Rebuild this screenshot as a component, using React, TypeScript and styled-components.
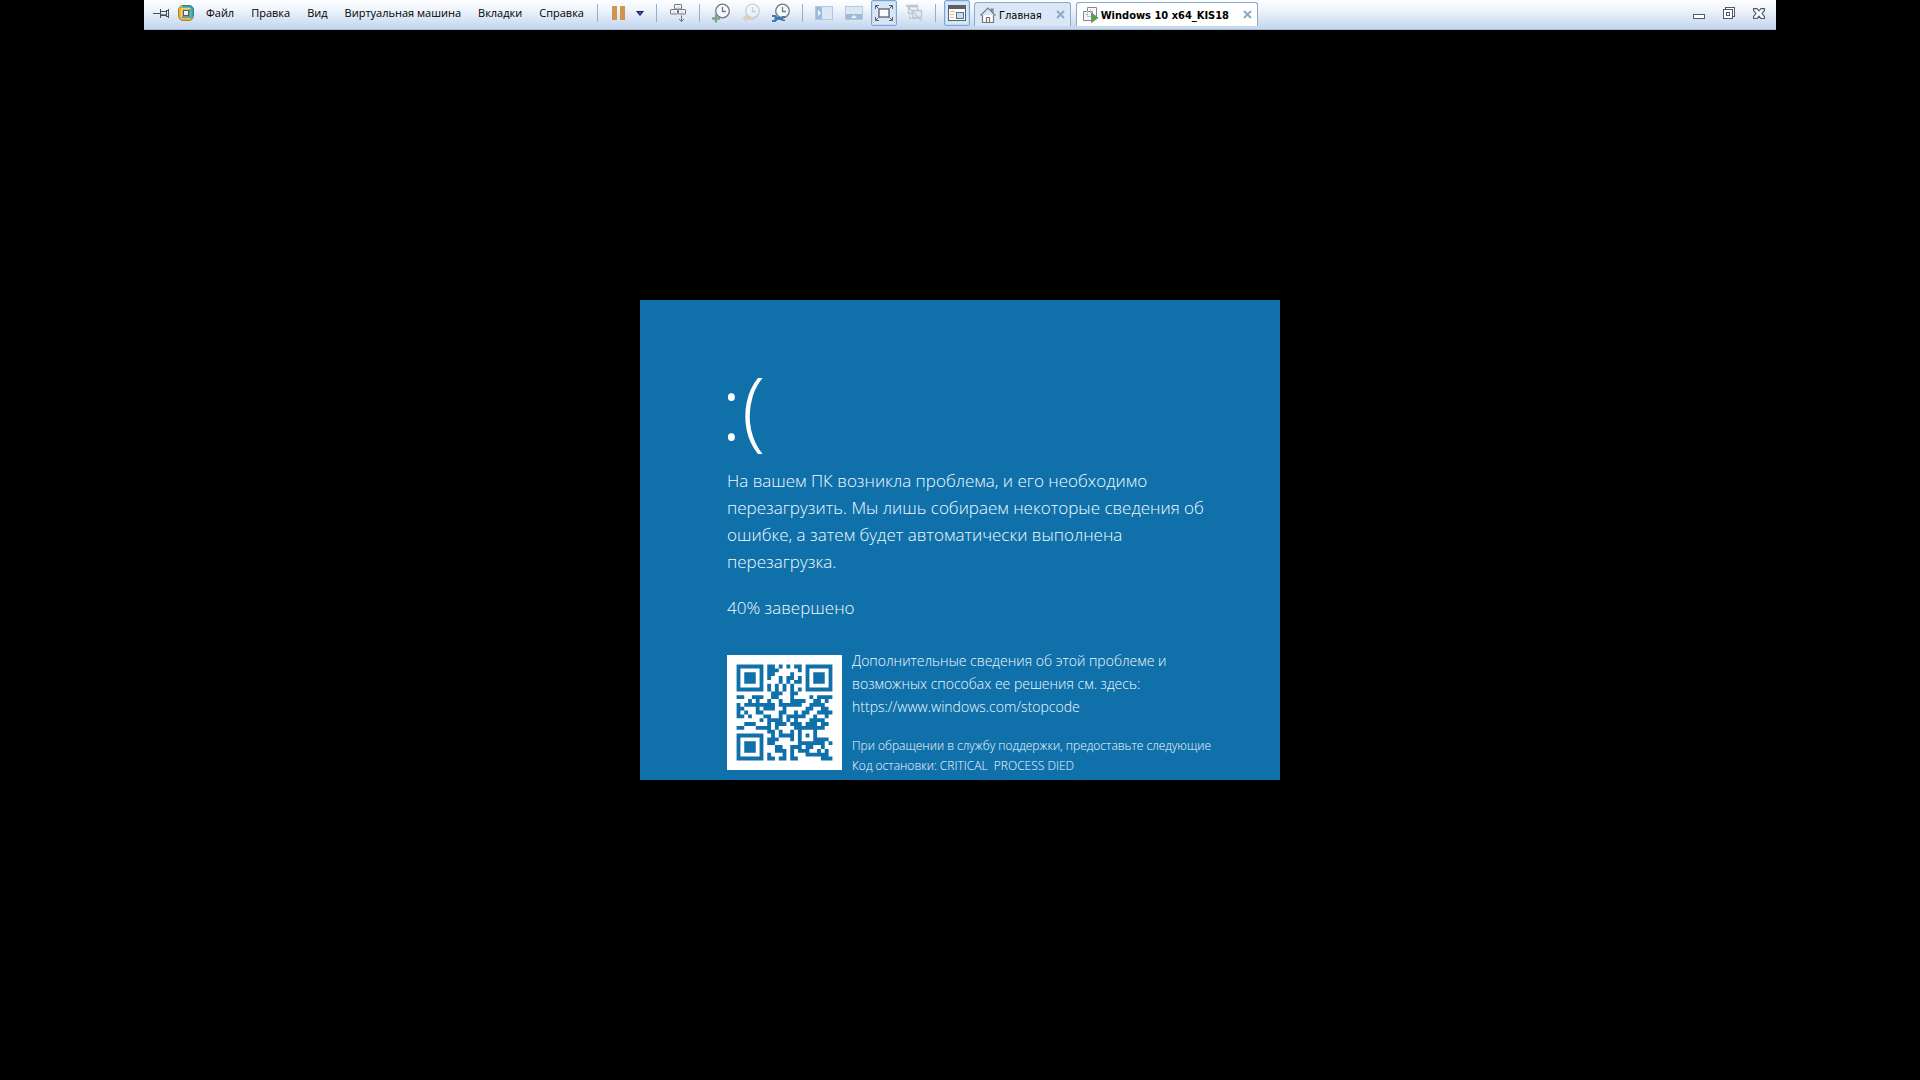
import React from "react";
import styled, { createGlobalStyle, css } from "styled-components";

const GlobalStyle = createGlobalStyle`
  *, *::before, *::after { box-sizing: border-box; }
  html, body { margin: 0; background: #000; }
  body { font-family: "Open Sans", "Noto Sans", sans-serif; }
  button { font: inherit; color: inherit; }
`;

const Desktop = styled.div`
  display: grid;
  grid-template-rows: 1fr auto 1fr;
  justify-items: center;
  min-height: 100vh;
  background: #000;
`;

/* ---------- full-screen toolbar ---------- */

const Bar = styled.header`
  display: flex;
  align-items: flex-start;
  align-self: start;
  width: 85%;
  height: 30px;
  padding: 0 4px;
  background: linear-gradient(#fdfeff 0%, #f1f6fc 30%, #dce8f6 60%, #c2d6ee 100%);
  border-bottom: 1px solid #a9bdd8;
  color: #000;
  font-size: 11px;
`;

const Group = styled.div<{ $gap?: number }>`
  display: flex;
  align-items: center;
  height: 26px;
  gap: ${(p) => p.$gap ?? 4}px;
`;

const Menu = styled.nav`
  display: flex;
  align-items: center;
  gap: 9px;
  height: 26px;
  margin: 0 1px 0 8px;
`;

const MenuButton = styled.button`
  padding: 0 4px;
  border: 0;
  background: none;
  line-height: 26px;
  white-space: nowrap;
`;

const Divider = styled.span`
  flex: none;
  width: 1px;
  height: 18px;
  margin: 4px 8px;
  background: #8fb0d6;
`;

const IconButton = styled.button<{ $active?: boolean; $narrow?: boolean }>`
  display: flex;
  align-items: center;
  justify-content: center;
  flex: none;
  width: ${(p) => (p.$narrow ? 16 : 26)}px;
  height: 26px;
  padding: 0;
  border: 1px solid transparent;
  border-radius: 2px;
  background: none;
  ${(p) =>
    p.$active &&
    css`
      border-color: #7fa6d2;
      background: #d6e6f8;
      box-shadow: inset 0 0 0 1px #c2daf4;
    `}
`;

const Tabs = styled.div`
  display: flex;
  align-items: flex-start;
  gap: 5px;
  margin: 2px auto 0 4px;
`;

const Tab = styled.div<{ $active?: boolean }>`
  display: flex;
  align-items: center;
  height: 24px;
  padding: 0 5px;
  border: 1px solid #88a9d0;
  border-bottom: 0;
  border-radius: 3px 3px 0 0;
  background: ${(p) => (p.$active ? "#fff" : "#dbe7f6")};
  font-family: "DejaVu Sans Condensed", "DejaVu Sans", sans-serif;
  font-size: 11px;
  font-weight: ${(p) => (p.$active ? 700 : 400)};
  font-stretch: condensed;
`;

const TabLabel = styled.button`
  display: flex;
  align-items: center;
  gap: 3px;
  padding: 0;
  border: 0;
  background: none;
  line-height: 22px;
  white-space: nowrap;
`;

const TabText = styled.span`
  padding-top: 2px;
`;

const TabClose = styled.button`
  display: flex;
  margin-left: 14px;
  padding: 0;
  border: 0;
  background: none;
`;

/* ---------- guest screen ---------- */

const StopScreen = styled.main`
  width: 640px;
  max-width: 100%;
  min-height: 480px;
  padding: 60px 64px 4px 87px;
  background: #1070aa;
  color: #f2fbff;
  font-family: "Open Sans", "Noto Sans", sans-serif;
  font-weight: 300;
`;

const Face = styled.h1`
  margin: 0 0 15px -6px;
  color: #fff;
  font-size: 87px;
  line-height: 92px;
  font-weight: 300;
`;

const Message = styled.p`
  margin: 0 0 19px;
  font-size: 17px;
  line-height: 27px;
`;

const Details = styled.section`
  display: flex;
  align-items: center;
  gap: 10px;
  margin-top: 28px;
`;

const QrBox = styled.svg`
  flex: none;
  width: 115px;
  height: 115px;
  background: #fff;
`;

const Info = styled.p`
  margin: 0 0 18px;
  font-size: 14px;
  line-height: 23px;
`;

const Support = styled.p`
  margin: 0;
  font-size: 12px;
  line-height: 20px;
  white-space: nowrap;
`;

/* ---------- QR code, version 2-L ---------- */

const QR_SIZE = 25;

function errorCorrection(data: number[], degree: number): number[] {
  const mul = (a: number, b: number) => {
    let r = 0;
    for (let i = 7; i >= 0; i--) {
      r = (r << 1) ^ ((r >> 7) * 0x11d);
      r ^= ((b >> i) & 1) * a;
    }
    return r;
  };
  const gen: number[] = new Array(degree).fill(0);
  gen[degree - 1] = 1;
  let root = 1;
  for (let i = 0; i < degree; i++) {
    for (let j = 0; j < degree; j++) {
      gen[j] = mul(gen[j], root);
      if (j + 1 < degree) gen[j] ^= gen[j + 1];
    }
    root = mul(root, 2);
  }
  const rem: number[] = new Array(degree).fill(0);
  for (const b of data) {
    const f = b ^ (rem.shift() as number);
    rem.push(0);
    gen.forEach((c, i) => (rem[i] ^= mul(c, f)));
  }
  return rem;
}

function encodeQr(text: string): boolean[][] {
  let bits = "0100" + text.length.toString(2).padStart(8, "0");
  for (const ch of text) bits += ch.charCodeAt(0).toString(2).padStart(8, "0");
  bits += "0000";
  const data = (bits.match(/.{8}/g) as string[]).map((b) => parseInt(b, 2));
  const words = [...data, ...errorCorrection(data, 10)];

  const grid: (boolean | null)[][] = Array.from({ length: QR_SIZE }, () =>
    new Array(QR_SIZE).fill(null)
  );
  const put = (x: number, y: number, v: boolean) => {
    if (x >= 0 && y >= 0 && x < QR_SIZE && y < QR_SIZE) grid[y][x] = v;
  };
  for (let i = 0; i < QR_SIZE; i++) {
    put(i, 6, i % 2 === 0);
    put(6, i, i % 2 === 0);
  }
  for (const [cx, cy] of [[3, 3], [21, 3], [3, 21]])
    for (let dy = -4; dy <= 4; dy++)
      for (let dx = -4; dx <= 4; dx++) {
        const d = Math.max(Math.abs(dx), Math.abs(dy));
        put(cx + dx, cy + dy, d !== 2 && d !== 4);
      }
  for (let dy = -2; dy <= 2; dy++)
    for (let dx = -2; dx <= 2; dx++)
      put(18 + dx, 18 + dy, Math.max(Math.abs(dx), Math.abs(dy)) !== 1);

  // Format word for level L, mask 4
  const format = "110011000101111";
  const f = (i: number) => format[14 - i] === "1";
  for (let i = 0; i <= 5; i++) put(8, i, f(i));
  put(8, 7, f(6));
  put(8, 8, f(7));
  put(7, 8, f(8));
  for (let i = 9; i < 15; i++) put(14 - i, 8, f(i));
  for (let i = 0; i < 8; i++) put(QR_SIZE - 1 - i, 8, f(i));
  for (let i = 8; i < 15; i++) put(8, QR_SIZE - 15 + i, f(i));
  put(8, QR_SIZE - 8, true);

  let n = 0;
  for (let right = QR_SIZE - 1; right >= 1; right -= 2) {
    if (right === 6) right = 5;
    for (let v = 0; v < QR_SIZE; v++)
      for (let j = 0; j < 2; j++) {
        const x = right - j;
        const y = ((right + 1) & 2) === 0 ? QR_SIZE - 1 - v : v;
        if (grid[y][x] === null) {
          const bit = n < words.length * 8 ? (words[n >> 3] >> (7 - (n & 7))) & 1 : 0;
          const mask = (Math.floor(x / 3) + Math.floor(y / 2)) % 2 === 0;
          grid[y][x] = (bit === 1) !== mask;
          n++;
        }
      }
  }
  return grid as boolean[][];
}

const qrPath = encodeQr("https://www.windows.com/stopcode")
  .flatMap((row, y) => row.map((on, x) => (on ? `M${x} ${y}h1v1h-1z` : "")))
  .join("");

const QrCode = () => (
  <QrBox viewBox="-2.5 -2.5 30 30" role="img" aria-label="QR">
    <path d={qrPath} fill="#1070aa" />
  </QrBox>
);

/* ---------- icons ---------- */

const PinIcon = () => (
  <svg width="18" height="18" viewBox="0 0 18 18" fill="none" stroke="#4a4d52">
    <path d="M1 9.500h7" />
    <path d="M8.500 5v9M9 7.500h5M9 11.500h5" />
    <path d="M9 10.500h5" stroke="#888" />
    <path d="M14.500 6v7M16.500 5v9M15 6.500h1M15 12.500h1" />
  </svg>
);

const VmLogo = () => (
  <svg width="16" height="16" viewBox="0 0 16 16" fill="none">
    <rect x=".5" y=".5" width="15" height="15" rx="4.500" fill="#e8b23e" stroke="#a3843c" />
    <path d="M5 1h7a3 3 0 0 1 3 3v7a3 3 0 0 1-2 3V5.500a2 2 0 0 0-2-2H3z" fill="#36a6bd" />
    <path d="M4.500.5H11A4.500 4.500 0 0 1 15.500 5v6" stroke="#2c7f94" />
    <rect x="3.500" y="3.500" width="9" height="9" rx="1" stroke="#f5d267" strokeWidth="1.400" />
    <path d="M12 4v8H4" stroke="#2f9ab2" strokeWidth="1.400" />
    <rect x="5.500" y="5.500" width="5" height="5" fill="#eef4fa" stroke="#466477" />
  </svg>
);

const PauseIcon = () => (
  <svg width="13" height="14" viewBox="0 0 13 14" fill="#d2934c">
    <path d="M0 0h5v14H0zM8 0h5v14H8z" />
  </svg>
);

const ArrowIcon = () => (
  <svg width="8" height="5" viewBox="0 0 8 5">
    <path d="M0 0h8L4 5z" fill="#0e164e" />
    <path d="M2 1h4L4 3.500z" fill="#3f5ee0" />
  </svg>
);

const KeysIcon = () => (
  <svg width="18" height="20" viewBox="0 0 18 20" fill="#f8fafc" stroke="#6f7276">
    <rect x="5.500" y="1.500" width="7" height="4.500" rx=".6" />
    <rect x="1.500" y="6.500" width="7" height="4.500" rx=".6" />
    <rect x="9.500" y="6.500" width="7" height="4.500" rx=".6" />
    <path d="M7.500 4h3M3.500 9h3M11.500 9h3" stroke="#c3c8ce" />
    <path d="M12.500 12.500v6M10 16l2.500 2.500L15 16" fill="none" />
  </svg>
);

const ClockIcon = ({ kind }: { kind: "add" | "back" | "manage" }) => (
  <svg width="20" height="20" viewBox="0 0 20 20" fill="none">
    <g opacity={kind === "back" ? 0.3 : 1} stroke="#74777b" strokeWidth="1.300">
      <circle cx="11.500" cy="8" r="6.800" fill="#f6f9fc" />
      <path d="M11.500 4v4.500H15" />
    </g>
    {kind === "add" && <path d="M1 15.500h8M5 11.500v8" stroke="#7fa588" strokeWidth="2.400" />}
    {kind === "back" && <path d="M1 15.500l5-4V14h7v3H6v2.500z" fill="#dfcdc0" />}
    {kind === "manage" && (
      <path
        d="M1 12h3.500l2 2H10l1.200-1h2.800v1.500h-1.800v2H14V18h-2.800L10 17H6.500l-2 2H1v-2h2.500v-3H1z"
        fill="#3e79b4"
      />
    )}
  </svg>
);

const SidePanelIcon = () => (
  <svg width="18" height="14" viewBox="0 0 18 14">
    <rect x=".5" y=".5" width="17" height="13" fill="#dce7f4" stroke="#b3c8e0" />
    <path d="M1 1h6v12H1z" fill="#9dbada" />
    <path d="M3 4l3 3-3 3z" fill="#f0f6fc" />
  </svg>
);

const BottomPanelIcon = () => (
  <svg width="18" height="14" viewBox="0 0 18 14">
    <rect x=".5" y=".5" width="17" height="13" fill="#dce7f4" stroke="#b3c8e0" />
    <path d="M1 8h16v5H1z" fill="#9dbada" />
    <path d="M6 12l3-3 3 3z" fill="#f0f6fc" />
  </svg>
);

const FullscreenIcon = () => (
  <svg width="18" height="16" viewBox="0 0 18 16" fill="none" stroke="#5d6063">
    <rect x="4" y="4" width="10" height="8" fill="#f8fbff" strokeWidth="1.300" />
    <path d="M.5 4V.5H4M.5.5l3 3M14 .5h3.500V4M17.500.5l-3 3M.5 12v3.500H4M.5 15.500l3-3M14 15.500h3.500V12M17.500 15.500l-3-3" />
  </svg>
);

const UnityIcon = () => (
  <svg width="18" height="18" viewBox="0 0 18 18" fill="none" stroke="#bcc5d0">
    <path d="M3.500 1.500h9v8h-9z" strokeWidth="1.300" />
    <path d="M3.500 2.500h9" strokeWidth="2" />
    <path d="M7.500 6.500h9v7h-9z" fill="#e2eaf4" strokeWidth="1.300" />
    <path d="M4.500 11.500v3h8" />
    <path d="M1 1l16 16" strokeWidth="1.300" />
  </svg>
);

const ThumbIcon = () => (
  <svg width="18" height="16" viewBox="0 0 18 16" fill="none">
    <rect x=".5" y=".5" width="17" height="15" fill="#fbfcfe" stroke="#5d6063" />
    <path d="M0 0h18v4H0z" fill="#5d6063" />
    <path d="M2 6.500h5M2 9.500h4M2 12.500h4" stroke="#dec27e" />
    <rect x="8.500" y="7.500" width="7" height="6" fill="#c8dcf3" stroke="#5d6f84" />
  </svg>
);

const HomeIcon = () => (
  <svg width="16" height="16" viewBox="0 0 16 16" fill="none" stroke="#77797c" strokeWidth="1.200">
    <path d="M2.500 8v7.500h11V8" fill="#fafcfe" />
    <path d="M.5 8.500L8 1l7.500 7.500" />
    <path d="M6.500 15v-4.500h3V15" />
    <path d="M11.500 4V2h1.500v3.500" />
  </svg>
);

const VmTabIcon = () => (
  <svg width="16" height="17" viewBox="0 0 16 17" fill="none" stroke="#84878a">
    <path d="M5.500 1.500h9v9h-9z" fill="#fff" />
    <path d="M1.500 5.500h9v9h-9z" fill="#f4f7fa" />
    <path d="M5.500 5v6M6 10.500h5M3 8.500h3M8.500 3v4" stroke="#b9c8d8" />
    <path d="M9.500 7l6.500 4.800-6.500 4.700z" fill="#43ab36" />
  </svg>
);

const CrossIcon = () => (
  <svg width="9" height="9" viewBox="0 0 9 9" stroke="#8aabc8" strokeWidth="2">
    <path d="M1 1l7 7M8 1L1 8" />
  </svg>
);

const MinimizeIcon = () => (
  <svg width="12" height="12" viewBox="0 0 12 12">
    <rect x=".5" y="7.500" width="11" height="4" fill="#fff" stroke="#555962" />
  </svg>
);

const RestoreIcon = () => (
  <svg width="12" height="12" viewBox="0 0 12 12" fill="#fff" stroke="#555962">
    <rect x="2.500" y=".5" width="9" height="9" />
    <rect x=".5" y="2.500" width="9" height="9" />
    <rect x="3.500" y="5.500" width="3" height="3" />
  </svg>
);

const CloseIcon = () => (
  <svg width="12" height="11" viewBox="0 0 12 11" fill="#fff" stroke="#555962" strokeWidth="1.200">
    <path d="M.6.6H4l2 2.200L8 .6h3.400v2L9 5.500l2.400 3v2H8L6 8.200l-2 2.300H.6v-2L3 5.500.6 2.600z" />
  </svg>
);

const menuItems = ["Файл", "Правка", "Вид", "Виртуальная машина", "Вкладки", "Справка"];

export default function App() {
  return (
    <>
      <GlobalStyle />
      <Desktop>
        <Bar>
          <Group>
            <IconButton aria-label="Закрепить"><PinIcon /></IconButton>
            <VmLogo />
          </Group>
          <Menu>
            {menuItems.map((item) => (
              <MenuButton key={item}>{item}</MenuButton>
            ))}
          </Menu>
          <Divider />
          <Group $gap={0}>
            <IconButton aria-label="Приостановить"><PauseIcon /></IconButton>
            <IconButton $narrow aria-label="Питание"><ArrowIcon /></IconButton>
          </Group>
          <Divider />
          <IconButton aria-label="Отправить Ctrl+Alt+Del"><KeysIcon /></IconButton>
          <Divider />
          <Group>
            <IconButton aria-label="Создать снимок"><ClockIcon kind="add" /></IconButton>
            <IconButton aria-label="Вернуться к снимку"><ClockIcon kind="back" /></IconButton>
            <IconButton aria-label="Управление снимками"><ClockIcon kind="manage" /></IconButton>
          </Group>
          <Divider />
          <Group>
            <IconButton aria-label="Библиотека"><SidePanelIcon /></IconButton>
            <IconButton aria-label="Панель эскизов"><BottomPanelIcon /></IconButton>
            <IconButton $active aria-label="Полный экран"><FullscreenIcon /></IconButton>
            <IconButton aria-label="Единство"><UnityIcon /></IconButton>
          </Group>
          <Divider />
          <IconButton $active aria-label="Показать вкладки"><ThumbIcon /></IconButton>
          <Tabs>
            <Tab>
              <TabLabel><HomeIcon /><TabText>Главная</TabText></TabLabel>
              <TabClose aria-label="Закрыть вкладку"><CrossIcon /></TabClose>
            </Tab>
            <Tab $active>
              <TabLabel><VmTabIcon /><TabText>Windows 10 x64_KIS18</TabText></TabLabel>
              <TabClose aria-label="Закрыть вкладку"><CrossIcon /></TabClose>
            </Tab>
          </Tabs>
          <Group>
            <IconButton aria-label="Свернуть"><MinimizeIcon /></IconButton>
            <IconButton aria-label="Восстановить"><RestoreIcon /></IconButton>
            <IconButton aria-label="Закрыть"><CloseIcon /></IconButton>
          </Group>
        </Bar>
        <StopScreen>
          <Face>:(</Face>
          <Message>
            На вашем ПК возникла проблема, и его необходимо перезагрузить. Мы лишь собираем
            некоторые сведения об ошибке, а затем будет автоматически выполнена перезагрузка.
          </Message>
          <Message>40% завершено</Message>
          <Details>
            <QrCode />
            <div>
              <Info>
                Дополнительные сведения об этой проблеме и<br />
                возможных способах ее решения см. здесь:<br />
                https://www.windows.com/stopcode
              </Info>
              <Support>
                При обращении в службу поддержки, предоставьте следующие<br />
                Код остановки: CRITICAL&nbsp; PROCESS DIED
              </Support>
            </div>
          </Details>
        </StopScreen>
      </Desktop>
    </>
  );
}
